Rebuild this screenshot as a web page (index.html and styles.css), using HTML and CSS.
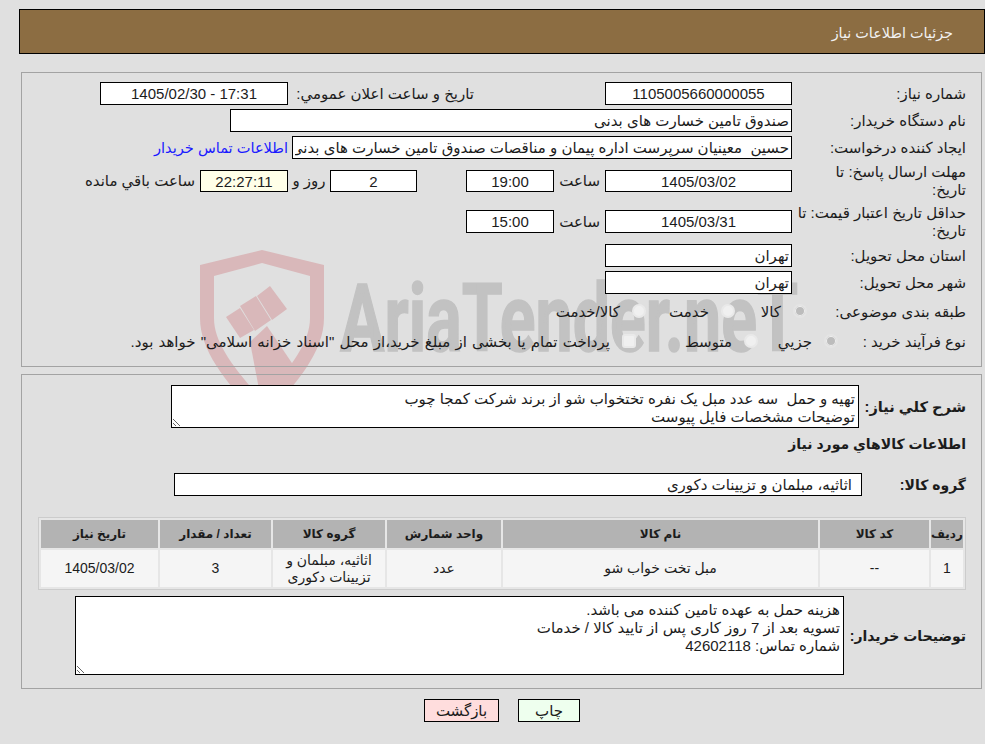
FILE: index.html
```html
<!DOCTYPE html>
<html lang="fa" dir="rtl">
<head>
<meta charset="utf-8">
<title>جزئیات اطلاعات نیاز</title>
<link rel="stylesheet" href="styles.css">
</head>
<body>
<svg class="watermark" viewBox="190 240 620 190" width="620" height="190" xmlns="http://www.w3.org/2000/svg">
  <g fill="#d9b8ba">
    <path fill-rule="evenodd" d="M262 250 L324 265 V318 C324 352 296 385 262 420 C228 385 200 352 200 318 V265 Z M262 263 L214 276 V318 C214 342 232 366 262 400 C292 366 310 342 310 318 V276 Z"/>
    <path d="M226 317 L240 308 L254 330 L240 338 Z"/>
    <path d="M240 306 L256 296 L271 320 L255 331 Z"/>
    <path d="M257 296 L270 286 L287 309 L272 320 Z"/>
    <path d="M250 342 L267 326 L298 372 L262 405 Z"/>
  </g>
  <text class="watermark-text" x="340" y="351" textLength="458" lengthAdjust="spacingAndGlyphs" direction="ltr">AriaTender.neT</text>
</svg>

<header class="title-bar">جزئیات اطلاعات نیاز</header>

<section class="panel panel-info">
  <div class="row row-std">
    <label class="label">شماره نیاز:</label>
    <input class="field w-date center" readonly value="1105005660000055">
    <label class="label-announce">تاریخ و ساعت اعلان عمومي:</label>
    <input class="field w-announce center" readonly value="17:31 - 1405/02/30">
  </div>
  <div class="row row-std">
    <label class="label">نام دستگاه خریدار:</label>
    <input class="field w-buyer" readonly value="صندوق تامین خسارت های بدنی">
  </div>
  <div class="row row-std">
    <label class="label">ایجاد کننده درخواست:</label>
    <input class="field w-creator" readonly value="حسین  معینیان سرپرست اداره پیمان و مناقصات صندوق تامین خسارت های بدنی">
    <a class="contact" href="#">اطلاعات تماس خریدار</a>
  </div>
  <div class="row row-deadline">
    <label class="label label-wrap">مهلت ارسال پاسخ: تا تاریخ:</label>
    <input class="field-s w-date center" readonly value="1405/03/02">
    <span class="unit-hour">ساعت</span>
    <input class="field-s w-time center" readonly value="19:00">
    <span class="spacer"></span>
    <input class="field-s w-days center" readonly value="2">
    <span class="unit-day">روز و</span>
    <input class="field-s w-clock center remain" readonly value="22:27:11">
    <span class="unit-left">ساعت باقي مانده</span>
  </div>
  <div class="row row-validity">
    <label class="label">حداقل تاریخ اعتبار قیمت: تا تاریخ:</label>
    <input class="field w-date center" readonly value="1405/03/31">
    <span class="unit-hour">ساعت</span>
    <input class="field w-time center" readonly value="15:00">
  </div>
  <div class="row row-std">
    <label class="label">استان محل تحویل:</label>
    <input class="field w-date" readonly value="تهران">
  </div>
  <div class="row row-std">
    <label class="label">شهر محل تحویل:</label>
    <input class="field w-date" readonly value="تهران">
  </div>
  <div class="row row-category">
    <label class="label-cat">طبقه بندی موضوعی:</label>
    <span class="opt opt-a"><input type="radio" name="cat" disabled checked><span>کالا</span></span>
    <span class="opt opt-b"><input type="radio" name="cat" disabled><span>خدمت</span></span>
    <span class="opt"><input type="radio" name="cat" disabled><span>کالا/خدمت</span></span>
  </div>
  <div class="row row-process">
    <label class="label-proc">نوع فرآیند خرید :</label>
    <span class="opt opt-c"><input type="radio" name="proc" disabled checked><span>جزيي</span></span>
    <span class="opt opt-d"><input type="radio" name="proc" disabled><span>متوسط</span></span>
    <span class="opt opt-pay"><input type="checkbox" disabled><span>پرداخت تمام یا بخشی از مبلغ خرید،از محل "اسناد خزانه اسلامی" خواهد بود.</span></span>
  </div>
</section>

<section class="panel panel-goods">
  <div class="row row-summary">
    <label class="label-b lb-summary">شرح کلي نياز:</label>
    <textarea class="area area-summary" readonly>تهیه و حمل  سه عدد مبل یک نفره تختخواب شو از برند شرکت کمجا چوب
توضیحات مشخصات فایل پیوست</textarea>
  </div>
  <h2 class="goods-title">اطلاعات کالاهاي مورد نياز</h2>
  <div class="row row-group">
    <label class="label-b lb-group">گروه کالا:</label>
    <input class="field w-group" readonly value="اثاثیه، مبلمان و تزیینات دکوری">
  </div>
  <table class="goods">
    <thead>
      <tr>
        <th class="c-idx">ردیف</th>
        <th class="c-code">کد کالا</th>
        <th class="c-name">نام کالا</th>
        <th class="c-unit">واحد شمارش</th>
        <th class="c-grp">گروه کالا</th>
        <th class="c-qty">تعداد / مقدار</th>
        <th class="c-date">تاریخ نیاز</th>
      </tr>
    </thead>
    <tbody>
      <tr>
        <td>1</td>
        <td>--</td>
        <td>مبل تخت خواب شو</td>
        <td>عدد</td>
        <td>اثاثیه، مبلمان و تزیینات دکوری</td>
        <td>3</td>
        <td>1405/03/02</td>
      </tr>
    </tbody>
  </table>
  <div class="row row-notes">
    <label class="label-b lb-notes">توضیحات خریدار:</label>
    <textarea class="area area-notes" readonly>هزینه حمل به عهده تامین کننده می باشد.
تسویه بعد از 7 روز کاری پس از تایید کالا / خدمات
شماره تماس: 42602118</textarea>
  </div>
</section>

<div class="actions">
  <button class="btn btn-print" type="button">چاپ</button>
  <button class="btn btn-back" type="button">بازگشت</button>
</div>
</body>
</html>
```
FILE: styles.css
```css
* { box-sizing: border-box; }
html { background: #e0e0e0; }
body {
  margin: 0;
  width: 985px;
  height: 744px;
  overflow: hidden;
  position: relative;
  background: transparent;
  color: #1c1c1c;
  font-family: "Liberation Sans", "DejaVu Sans", sans-serif;
  font-size: 15px;
  line-height: 18px;
}
.watermark { position: absolute; left: 190px; top: 240px; z-index: -1; }
.watermark-text {
  font-family: "Roboto", sans-serif;
  font-weight: 700;
  font-size: 94px;
  fill: #c2c2c2;
  stroke: #c2c2c2;
  stroke-width: 1.5px;
}
.title-bar {
  margin: 9px 0 0 0;
  width: 966px;
  height: 45px;
  border: 1px solid #000;
  background: #8c6d42;
  color: #f2f2f2;
  padding: 14px 31px 0 0;
  font-size: 14.4px;
}
.panel {
  margin-right: 3px;
  width: 961px;
  border: 1px solid #a3a3a3;
  padding-right: 15px;
}
.panel-info { margin-top: 18px; height: 295px; padding-top: 9px; }
.panel-goods { margin-top: 7px; height: 315px; padding-top: 10px; }
.row { display: flex; align-items: center; }
.row-std { height: 23px; margin-bottom: 4px; }
.row-deadline { height: 36px; margin-bottom: 4px; }
.row-validity { height: 37px; margin-bottom: 4px; }
.row-category { height: 28px; margin-top: 1px; margin-bottom: 4px; }
.row-process { height: 24px; }
.label { width: 174px; flex: none; }
.label-wrap { padding-left: 20px; }
.label-announce { width: 186px; margin-right: 131px; flex: none; white-space: nowrap; }
.label-cat { width: 159px; flex: none; }
.label-proc { width: 128px; flex: none; }
.field, .field-s {
  border: 1px solid #000;
  background: #fff;
  color: #1c1c1c;
  font: inherit;
  padding: 0 2px;
  outline: none;
  flex: none;
  height: 23px;
  border-radius: 0;
}
.field-s { height: 22px; }
.center { text-align: center; }
.w-date { width: 187px; }
.w-announce { width: 188px; }
.w-buyer { width: 562px; }
.w-creator { width: 500px; }
.w-time { width: 88px; }
.w-days { width: 87px; }
.w-clock { width: 88px; }
.w-group { width: 688px; padding-right: 9px; }
.remain { background: #ffffe8; }
.contact { color: #1a1aff; text-decoration: none; margin-right: 4px; white-space: nowrap; font-size: 14.6px; }
.unit-hour { width: 51px; padding-right: 5px; flex: none; }
.spacer { width: 49px; flex: none; }
.unit-day { width: 42px; text-align: center; flex: none; }
.unit-left { margin-right: 5px; white-space: nowrap; }
.opt { display: flex; align-items: center; flex: none; white-space: nowrap; }
.opt-a { width: 72px; }
.opt-b { width: 89px; }
.opt-c { width: 80px; }
.opt-d { width: 122px; }
.opt-pay { word-spacing: 1px; }
.opt input {
  appearance: none;
  margin: 0 0 2px 12px;
  width: 14px;
  height: 14px;
  flex: none;
  border: 2px solid #e9e9e9;
  background: #f0f0f0;
  border-radius: 50%;
}
.opt input[type="checkbox"] { border-radius: 3px; }
.opt input:checked { background: #bcbcbc; box-shadow: inset 0 0 0 1px #f0f0f0; border-color: #e4e4e4; }
.label-b { font-weight: 700; font-size: 14px; flex: none; white-space: nowrap; }
.lb-summary { width: 107px; font-size: 14.6px; }
.lb-group { width: 104px; }
.lb-notes { width: 122px; }
.area {
  border: 1px solid #000;
  background: #fff;
  color: #1c1c1c;
  font: inherit;
  padding: 4px 3px 0;
  outline: none;
  border-radius: 0;
  display: block;
  flex: none;
}
.area-summary { width: 688px; height: 43px; overflow: hidden; }
.area-notes { width: 769px; height: 79px; overflow: hidden; }
.row-summary { height: 43px; }
.goods-title { margin: 4px 0 0; height: 24px; font-size: 14px; line-height: 24px; font-weight: 700; }
.row-group { height: 23px; margin-top: 17px; }
.goods {
  margin-top: 21px;
  width: 928px;
  table-layout: fixed;
  border-collapse: separate;
  border-spacing: 2px;
  border: 1px solid #cccccc;
  background: #e6e6e6;
  font-size: 14px;
}
.goods th {
  height: 28px;
  padding: 0;
  background: #b3b3b3;
  font-size: 12px;
  font-weight: 700;
}
.goods td {
  height: 37px;
  padding: 0 8px;
  background: #f5f5f5;
  text-align: center;
  line-height: 17px;
}
.c-idx { width: 32px; }
.c-code { width: 109px; }
.c-name { width: 315px; }
.c-unit { width: 114px; }
.c-grp { width: 112px; }
.c-qty { width: 111px; }
.c-date { width: 117px; }
.row-notes { height: 79px; margin-top: 6px; }
.actions { display: flex; justify-content: space-between; margin-top: 10px; margin-right: 405px; width: 156px; }
.btn {
  height: 23px;
  border: 1px solid #000;
  border-radius: 0;
  font: inherit;
  color: #1c1c1c;
  padding: 0;
}
.btn-print { width: 62px; background: #eeffee; }
.btn-back { width: 75px; background: #ffdddd; }
```
